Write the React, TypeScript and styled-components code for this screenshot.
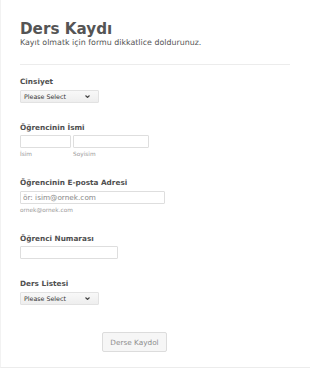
import React from "react";
import styled, { createGlobalStyle } from "styled-components";

const Global = createGlobalStyle`
  html, body { margin: 0; padding: 0; background: #fff; }
  body { font-family: "DejaVu Sans", Verdana, sans-serif; }
  * { box-sizing: border-box; }
`;

const Page = styled.div`
  width: 310px;
  height: 368px;
  border-left: 1px solid #f2f2f2;
  border-bottom: 1px solid #ececec;
  padding: 20px 20px 0 19px;
  display: flex;
  flex-direction: column;
  align-items: flex-start;
`;

const Title = styled.h1`
  margin: 0;
  font-size: 15.2px;
  line-height: 18px;
  font-weight: bold;
  color: #555;
`;

const Subtitle = styled.div`
  font-size: 7.9px;
  line-height: 10px;
  color: #555;
`;

const Divider = styled.div`
  align-self: stretch;
  height: 1px;
  background: #ececec;
  margin: 16px 0 12px;
`;

const Field = styled.div`
  display: flex;
  flex-direction: column;
  align-items: flex-start;
  margin-bottom: 20px;
`;

const Label = styled.label`
  font-size: 7.3px;
  line-height: 9px;
  font-weight: bold;
  color: #4f4f4f;
  margin-bottom: 3.5px;
`;

const SelectBox = styled.div`
  position: relative;
  width: 79px;
  height: 13px;
  border: 1px solid #e2e2e2;
  border-radius: 1px;
  background: linear-gradient(#f8f8f8, #eeeeee);
  display: flex;
  align-items: center;
  padding: 0 0 0 3px;
  font-size: 6.3px;
  color: #333;
`;

const Chevron = styled.svg`
  position: absolute;
  right: 8px;
  top: 4.5px;
  width: 5px;
  height: 3px;
`;

const Row = styled.div`
  display: flex;
  gap: 2px;
`;

const Col = styled.div`
  display: flex;
  flex-direction: column;
`;

const Input = styled.input<{ $w: number }>`
  width: ${(p) => p.$w}px;
  height: 13px;
  margin: 0;
  padding: 0 2px;
  border: 1px solid #dedede;
  border-radius: 1px;
  background: #fff;
  font-family: "DejaVu Sans", Verdana, sans-serif;
  font-size: 7.3px;
  color: #555;
  outline: none;
  &::placeholder { color: #888; }
`;

const Sub = styled.span`
  font-size: 5.8px;
  line-height: 8px;
  color: #999;
  margin-top: 2px;
`;

const ButtonRow = styled.div`
  margin: 5px 0 0 82px;
`;

const Button = styled.button`
  width: 65px;
  height: 20px;
  padding: 0;
  border: 1px solid #dcdcdc;
  border-radius: 2px;
  background: #f6f6f6;
  font-family: "DejaVu Sans", Verdana, sans-serif;
  font-size: 7.3px;
  color: #8c8c8c;
`;

const Dropdown = () => (
  <SelectBox role="combobox">
    Please Select
    <Chevron viewBox="0 0 5 3">
      <path d="M0.5 0.5 L2.5 2.5 L4.5 0.5" fill="none" stroke="#444" strokeWidth="1.1" />
    </Chevron>
  </SelectBox>
);

export default function App() {
  return (
    <>
      <Global />
      <Page>
        <Title>Ders Kaydı</Title>
        <Subtitle>Kayıt olmatk için formu dikkatlice doldurunuz.</Subtitle>
        <Divider />
        <Field>
          <Label>Cinsiyet</Label>
          <Dropdown />
        </Field>
        <Field>
          <Label>Öğrencinin İsmi</Label>
          <Row>
            <Col>
              <Input $w={51} />
              <Sub>İsim</Sub>
            </Col>
            <Col>
              <Input $w={76} />
              <Sub>Soyisim</Sub>
            </Col>
          </Row>
        </Field>
        <Field>
          <Label>Öğrencinin E-posta Adresi</Label>
          <Input $w={145} placeholder="ör: isim@ornek.com" />
          <Sub>ornek@ornek.com</Sub>
        </Field>
        <Field>
          <Label>Öğrenci Numarası</Label>
          <Input $w={98} />
        </Field>
        <Field>
          <Label>Ders Listesi</Label>
          <Dropdown />
        </Field>
        <ButtonRow>
          <Button>Derse Kaydol</Button>
        </ButtonRow>
      </Page>
    </>
  );
}
